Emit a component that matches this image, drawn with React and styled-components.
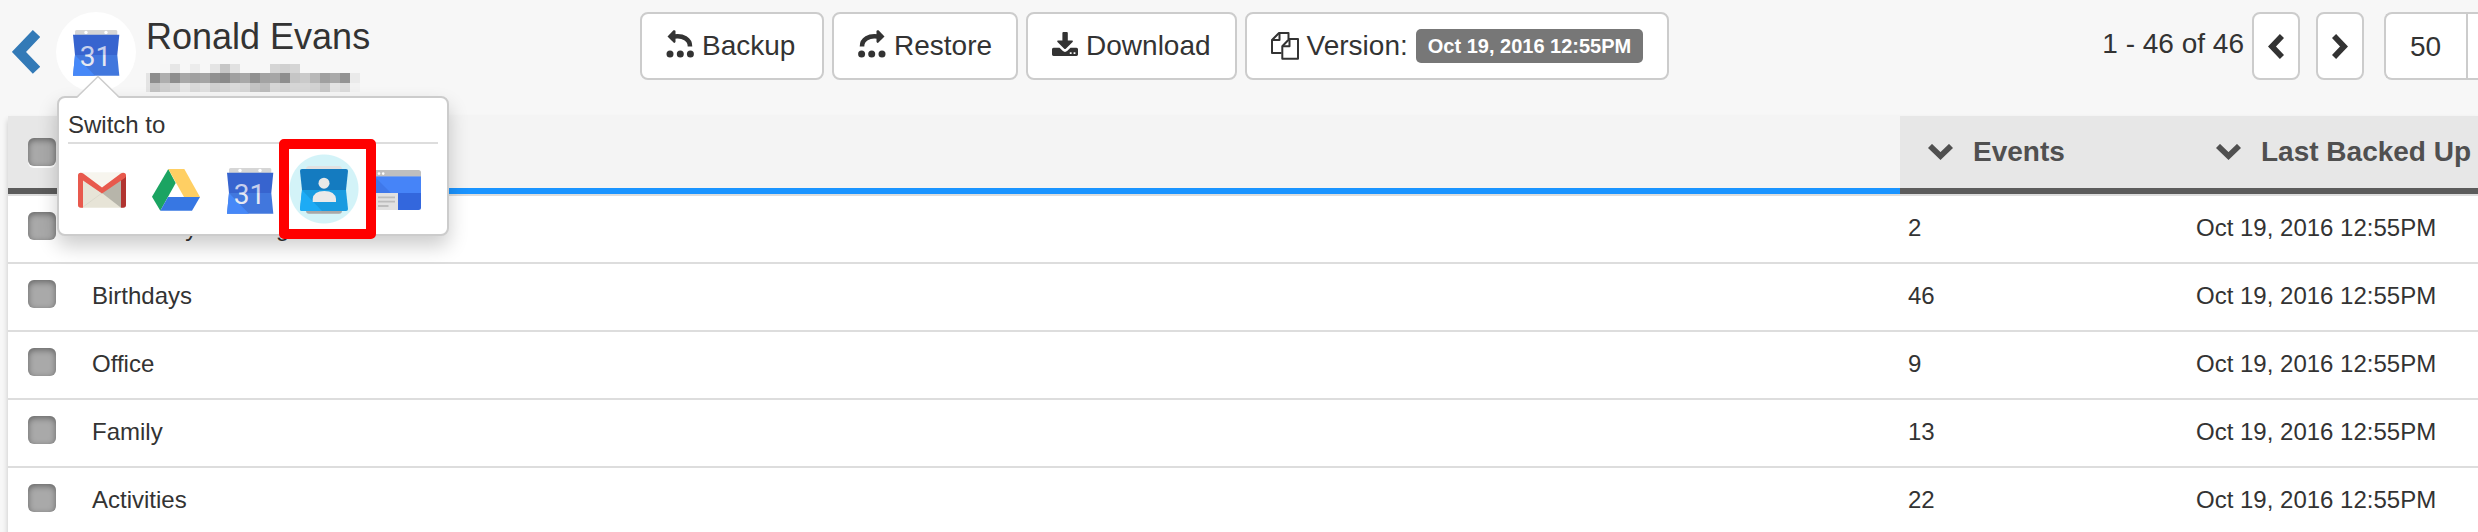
import styled, { createGlobalStyle, css } from 'styled-components';

const GlobalStyle = createGlobalStyle`
  * {
    box-sizing: border-box;
  }
  body {
    margin: 0;
    overflow: hidden;
    background: #f7f7f7;
    color: #333;
    font-family: 'Liberation Sans', Arial, sans-serif;
    font-size: 24px;
  }
  button, select {
    font-family: inherit;
    color: inherit;
  }
`;

// shared frame of every control in the top bar
const control = css`
  height: 68px;
  border: 2px solid #ccc;
  border-radius: 8px;
  background: #fff;
  font-size: 28px;
`;

const TopBar = styled.header`
  display: grid;
  grid-template-columns: 640px 1fr auto;
  align-items: start;
  padding: 12px 0 24px;
`;

const Profile = styled.div`
  display: flex;
  align-items: center;
  padding-left: 12px;
`;

const BackLink = styled.a`
  display: flex;
  margin-right: 16px;
  color: #337ab7;
`;

const Avatar = styled.div`
  position: relative;
  display: flex;
  align-items: center;
  justify-content: center;
  width: 80px;
  height: 80px;
  border-radius: 50%;
  background: #fff;
`;

const Who = styled.div`
  display: flex;
  flex-direction: column;
  gap: 2px;
  margin-left: 10px;
`;

const UserName = styled.h1`
  margin: 0;
  font-size: 36px;
  font-weight: 400;
  line-height: 50px;
`;

const Toolbar = styled.div`
  display: flex;
  gap: 8px;
`;

const ToolButton = styled.button`
  ${control}
  display: flex;
  align-items: center;
  gap: 8px;
  min-width: 184px;
  padding: 0 24px;
  white-space: nowrap;
`;

const Badge = styled.span`
  padding: 0 12px;
  border-radius: 5px;
  background: #777;
  color: #fff;
  font-size: 20px;
  font-weight: 700;
  line-height: 34px;
`;

const Pager = styled.nav`
  display: flex;
`;

const PagerText = styled.span`
  margin-right: 8px;
  font-size: 28px;
  line-height: 64px;
`;

const PagerButton = styled.button`
  ${control}
  display: flex;
  align-items: center;
  justify-content: center;
  width: 48px;
  margin-right: ${(props) => (props.$last ? '20px' : '16px')};
  padding: 0;
`;

const PageSize = styled.div`
  ${control}
  display: flex;
  width: 94px;
  border-right: 0;
  border-radius: 8px 0 0 8px;
`;

const PageSizeSelect = styled.select`
  appearance: none;
  width: 82px;
  padding: 0 0 0 24px;
  border: 0;
  border-right: 2px solid #ccc;
  border-radius: 8px 0 0 8px;
  background: none;
  font-size: 28px;
`;

const Popover = styled.div`
  position: absolute;
  z-index: 2;
  top: 84px;
  left: 1px;
  width: 392px;
  padding: 10px 9px 20px;
  border: 2px solid #ccc;
  border-radius: 8px;
  background: #fff;
  box-shadow: 0 10px 20px rgba(0, 0, 0, 0.2);
`;

const Arrow = styled.svg`
  position: absolute;
  top: -23px;
  left: 17px;
`;

const PopoverTitle = styled.h2`
  margin: 0;
  border-bottom: 2px solid #ddd;
  font-size: 24px;
  font-weight: 400;
  line-height: 34px;
`;

const AppList = styled.div`
  display: flex;
  gap: 26px;
  padding: 22px 0 0 10px;
`;

const AppLink = styled.a`
  position: relative;
  z-index: ${(props) => (props.$marked ? 1 : 0)};
  display: flex;
  width: 48px;
  height: 48px;
`;

const Marker = styled.span`
  position: absolute;
  top: -27px;
  left: -21px;
  width: 97px;
  height: 100px;
  border: 10px solid #f00;
  border-radius: 5px;
  background: radial-gradient(circle at 35px 40px, #d3f3f8 34px, #fff 35px);
`;

const AppIcon = styled.svg`
  position: relative;
  display: block;
  flex: none;
`;

const Panel = styled.main`
  margin-left: 8px;
  background: #fff;
  box-shadow: 0 4px 6px rgba(0, 0, 0, 0.2);
`;

const Table = styled.table`
  width: 100%;
  table-layout: fixed;
  border-spacing: 0;
`;

const HeadCell = styled.th`
  width: ${(props) => props.$width || 'auto'};
  height: 78px;
  padding: ${(props) => (props.$check ? '22px 20px 0' : '0 0 0 28px')};
  border-bottom: 6px solid ${(props) => (props.$sorted ? '#1a94ff' : '#5c5c5c')};
  background: ${(props) => (props.$sorted ? '#f4f4f4' : '#e7e7e7')};
  color: #505050;
  font-size: 28px;
  text-align: left;
  vertical-align: ${(props) => (props.$check ? 'top' : 'middle')};
`;

const HeadLabel = styled.span`
  display: flex;
  align-items: center;
  gap: 20px;
  white-space: nowrap;
`;

const Cell = styled.td`
  height: 68px;
  padding: 16px 8px;
  border-top: 2px solid #ddd;
  line-height: 32px;
  vertical-align: top;
  white-space: nowrap;
`;

const CheckCell = styled(Cell)`
  padding: 16px 20px;
`;

const Checkbox = styled.input.attrs({ type: 'checkbox' })`
  appearance: none;
  display: block;
  width: 28px;
  height: 28px;
  margin: 0;
  border-radius: 6px;
  background: #a9a9a9;
  box-shadow: inset 0 2px 6px rgba(0, 0, 0, 0.4), 0 2px 0 rgba(255, 255, 255, 0.9);
`;

const turns = { left: 0, right: 180, down: 270 };

const Chevron = ({ to, scale = 1 }) => {
  const flat = to === 'down';
  const w = (flat ? 25 : 16) * scale;
  const h = (flat ? 16 : 25) * scale;
  return (
    <svg width={w} height={h} viewBox={flat ? '-12.5 -8 25 16' : '-8 -12.5 16 25'} aria-hidden='true'>
      <path
        d='M6 -10.5 L-4 0 L6 10.5'
        fill='none'
        stroke='currentColor'
        strokeWidth='5.8'
        transform={`rotate(${turns[to]})`}
      />
    </svg>
  );
};

// curved arrow over three dots, mirrored for restore
const HistoryIcon = ({ mirrored }) => (
  <svg width='28' height='32' viewBox='0 0 28 32' fill='#333' aria-hidden='true'>
    <g transform={mirrored ? 'translate(28 0) scale(-1 1)' : undefined}>
      <path d='M1.5 6.5 L7.5 .3 Q9.5 -.2 9.5 1.5 V11.5 Q9.3 13.2 7.8 12.8 Z' />
      <path d='M8 6.6 C17 5.2 24 9 24 16.5' fill='none' stroke='#333' strokeWidth='4.6' />
      <circle cx='4' cy='24' r='3.5' />
      <circle cx='14.3' cy='24' r='3.5' />
      <circle cx='24.4' cy='24' r='3.5' />
    </g>
  </svg>
);

const DownloadIcon = () => (
  <svg width='26' height='32' viewBox='0 0 26 32' fill='#333' aria-hidden='true'>
    <path d='M1.5 17.8 H7.5 L10.6 20.8 Q13 23 15.4 20.8 L18.5 17.8 H24.5 Q26 17.8 26 19.3 V24.6 Q26 26 24.5 26 H1.5 Q0 26 0 24.6 V19.3 Q0 17.8 1.5 17.8 Z' />
    <path d='M10.4 3 Q10.4 2 11.4 2 H14.8 Q15.8 2 15.8 3 V10.6 H20.3 Q21.5 10.8 20.6 12 L13.8 18.8 Q13 19.4 12.2 18.8 L5.5 12 Q4.6 10.8 5.8 10.6 H10.4 Z' />
    <path d='M17.8 22.2 h1.8 v1.8 h-1.8 z M21.6 22.2 h1.8 v1.8 h-1.8 z' fill='#fff' />
  </svg>
);

const FilesIcon = () => (
  <svg width='28' height='32' viewBox='0 1 28 32' fill='none' stroke='#333' strokeWidth='2' strokeLinejoin='round' aria-hidden='true'>
    <path d='M10.5 24 H1 V11 L8 4 H17.5 V10' />
    <path d='M1 11 H8.5 V4' />
    <path d='M11.3 17.3 L18.3 10 H27 V29.8 H11.3 Z' />
    <path d='M11.3 17.3 H18.5 V10' />
  </svg>
);

const GmailIcon = () => (
  <AppIcon width='48' height='48' viewBox='0 0 48 48' aria-hidden='true'>
    <path d='M3 6.7 H45 V41.7 H3 Z' fill='#e7e4d7' />
    <path d='M4 6.7 H44 L24 24 Z' fill='#f7f5ee' />
    <path d='M24 27 L43 13 V41.7 Z' fill='#b7b5aa' />
    <path d='M5 41 L24 27' stroke='#d4d1c4' strokeWidth='.6' />
    <path d='M43 13 L48 9 V39 Q48 41.7 45.3 41.7 H43 Z' fill='#b13430' />
    <path d='M0 9.5 Q0 6.7 2.7 6.7 Q4 6.7 5.2 7.6 L24 21.5 L42.8 7.6 Q44 6.7 45.3 6.7 Q48 6.7 48 9.5 Q48 11 46.8 12 L24 27.6 L5 14.6 V41.7 H2.7 Q0 41.7 0 39 Z' fill='#e8594d' />
  </AppIcon>
);

const DriveIcon = () => (
  <AppIcon width='48' height='48' viewBox='0 0 48 48' aria-hidden='true'>
    <path d='M16.3 3 L23.7 17 L8.3 44.8 L0 30.8 Z' fill='#1ba462' />
    <path d='M16.3 3 H32.3 L48 31 H32 Z' fill='#ffcf63' />
    <path d='M16 31 H48 L40 44.8 H8.3 Z' fill='#3777e3' />
  </AppIcon>
);

const CalendarIcon = () => (
  <AppIcon width='48' height='48' viewBox='0 0 48 48' aria-hidden='true'>
    <defs>
      <linearGradient id='digits' gradientUnits='userSpaceOnUse' x1='0' y1='17' x2='0' y2='37'>
        <stop offset='.5' stopColor='#c6cfec' />
        <stop offset='.5' stopColor='#e6e9f2' />
      </linearGradient>
    </defs>
    <path d='M3 7 V3.5 Q3 2 4.5 2 H44 Q45.3 2 45.3 3.5 V7 Z' fill='#d6d6d6' />
    <circle cx='14' cy='4.5' r='1.7' fill='#fff' />
    <circle cx='34' cy='4.5' r='1.7' fill='#fff' />
    <path d='M1 6.8 H47.3 L45.3 27 H3 Z' fill='#3764cf' />
    <path d='M3 27 H45.3 L47.3 47.8 H1 Z' fill='#4177dd' />
    <path d='M3 27 L23 47.8 H1 Z' fill='#4688f8' />
    <text x='23.5' y='38' fill='url(#digits)' fontFamily='Roboto, sans-serif' fontSize='28' textAnchor='middle'>
      31
    </text>
  </AppIcon>
);

const ContactsIcon = () => (
  <AppIcon width='48' height='48' viewBox='0 0 48 48' aria-hidden='true'>
    <path d='M6 3.5 Q6 0 9 0 H39 Q42 0 42 3.5 Z' fill='#e1e1e1' />
    <path d='M6 44.5 Q6 47.8 9 47.8 H39 Q42 47.8 42 44.5 Z' fill='#a8a8a8' />
    <path d='M2 24 L0 5 Q0 3 2 3 H46 Q48 3 48 5 L46 24 Z' fill='#147bc0' />
    <path d='M2 24 H46 L48 43 Q48 45 46 45 H2 Q0 45 0 43 Z' fill='#189be0' />
    <path d='M2 24 L22 45 H2 Q0 45 0 43 Z' fill='#1dabf5' />
    <circle cx='24' cy='17.2' r='5.5' fill='#e8e8e8' />
    <path d='M12.7 36 V33 Q13.5 25 24.3 25 Q35 25 36 33 V36 Z' fill='#eaeaea' />
  </AppIcon>
);

const SitesIcon = () => (
  <AppIcon width='48' height='48' viewBox='0 0 48 48' aria-hidden='true'>
    <path d='M0 10.5 V4 H44.5 Q47 4 47 6.5 V10.5 Z' fill='#bfbfbf' />
    <circle cx='5' cy='7.6' r='1.3' fill='#fff' />
    <circle cx='9.2' cy='7.6' r='1.3' fill='#fff' />
    <path d='M0 10 H47 V27 H0 Z' fill='#4684f8' />
    <path d='M0 10 H47 V11 H0 Z' fill='#7aa0e6' />
    <path d='M0 10 L17 27 H0 Z' fill='#3f78ea' />
    <path d='M24 27 H47 V41.5 Q47 44 44.5 44 H24 Z' fill='#3367dd' />
    <path d='M0 27 H24 V44 H0 Z' fill='#e1e1e1' />
    <path d='M4 31.4 H21 M4 35.7 H21 M4 40 H14.5' stroke='#bdbdbd' strokeWidth='1.8' />
  </AppIcon>
);

// grey levels of the masked address, one list for each line of blocks
const mask = [
  [247, 246, 230, 247, 236, 247, 228, 198, 225, 247, 247, 247, 213, 208, 213, 247, 247, 247, 247, 247, 247],
  [142, 174, 142, 168, 160, 165, 144, 138, 160, 168, 145, 163, 166, 142, 197, 202, 184, 160, 170, 147, 234],
  [195, 206, 213, 229, 217, 224, 207, 212, 218, 214, 195, 188, 214, 210, 214, 214, 210, 198, 228, 219, 242],
];

const MaskedAddress = () => (
  <svg width='214' height='28' viewBox='-4 0 214 28' role='img' aria-label='Hidden address' shapeRendering='crispEdges'>
    <rect x='-4' y='9' width='4' height='19' fill='#e4e4e4' />
    {mask.map((line, y) =>
      line.map((level, x) => (
        <rect key={`${x}-${y}`} x={x * 10} y={[0, 9, 19][y]} width='10' height={y === 1 ? 10 : 9} fill={`rgb(${level},${level},${level})`} />
      ))
    )}
  </svg>
);

const apps = [
  { name: 'Gmail', Icon: GmailIcon },
  { name: 'Drive', Icon: DriveIcon },
  { name: 'Calendar', Icon: CalendarIcon },
  { name: 'Contacts', Icon: ContactsIcon, marked: true },
  { name: 'Sites', Icon: SitesIcon },
];

const rows = [
  { name: 'University meeting', events: 2 },
  { name: 'Birthdays', events: 46 },
  { name: 'Office', events: 9 },
  { name: 'Family', events: 13 },
  { name: 'Activities', events: 22 },
];

const backedUp = 'Oct 19, 2016 12:55PM';

const SwitchPopover = () => (
  <Popover>
    <Arrow width='44' height='23' viewBox='0 0 44 23' aria-hidden='true'>
      <path d='M1 23 L22 1.5 L43 23 Z' fill='#fff' />
      <path d='M1 22 L22 1.5 L43 22' fill='none' stroke='#ccc' strokeWidth='1.5' />
    </Arrow>
    <PopoverTitle>Switch to</PopoverTitle>
    <AppList>
      {apps.map(({ name, Icon, marked }) => (
        <AppLink key={name} href={`#${name.toLowerCase()}`} aria-label={name} $marked={marked}>
          {marked && <Marker />}
          <Icon />
        </AppLink>
      ))}
    </AppList>
  </Popover>
);

const App = () => {
  return (
    <>
      <GlobalStyle />
      <TopBar>
        <Profile>
          <BackLink href='#back' aria-label='Back'>
            <Chevron to='left' scale={1.75} />
          </BackLink>
          <Avatar>
            <CalendarIcon />
            <SwitchPopover />
          </Avatar>
          <Who>
            <UserName>Ronald Evans</UserName>
            <MaskedAddress />
          </Who>
        </Profile>
        <Toolbar>
          <ToolButton>
            <HistoryIcon />
            Backup
          </ToolButton>
          <ToolButton>
            <HistoryIcon mirrored />
            Restore
          </ToolButton>
          <ToolButton>
            <DownloadIcon />
            Download
          </ToolButton>
          <ToolButton>
            <FilesIcon />
            Version: <Badge>{backedUp}</Badge>
          </ToolButton>
        </Toolbar>
        <Pager aria-label='Pages'>
          <PagerText>1 - 46 of 46</PagerText>
          <PagerButton aria-label='Previous page'>
            <Chevron to='left' />
          </PagerButton>
          <PagerButton aria-label='Next page' $last>
            <Chevron to='right' />
          </PagerButton>
          <PageSize>
            <PageSizeSelect aria-label='Rows per page' defaultValue='50'>
              <option>50</option>
            </PageSizeSelect>
          </PageSize>
        </Pager>
      </TopBar>
      <Panel>
        <Table>
          <thead>
            <tr>
              <HeadCell $width='76px' $check>
                <Checkbox aria-label='Select all' />
              </HeadCell>
              <HeadCell $sorted aria-label='Name' />
              <HeadCell $width='288px'>
                <HeadLabel>
                  <Chevron to='down' />
                  Events
                </HeadLabel>
              </HeadCell>
              <HeadCell $width='290px'>
                <HeadLabel>
                  <Chevron to='down' />
                  Last Backed Up
                </HeadLabel>
              </HeadCell>
            </tr>
          </thead>
          <tbody>
            {rows.map((row) => (
              <tr key={row.name}>
                <CheckCell>
                  <Checkbox aria-label={`Select ${row.name}`} />
                </CheckCell>
                <Cell>{row.name}</Cell>
                <Cell>{row.events}</Cell>
                <Cell>{backedUp}</Cell>
              </tr>
            ))}
          </tbody>
        </Table>
      </Panel>
    </>
  );
};

export default App;
